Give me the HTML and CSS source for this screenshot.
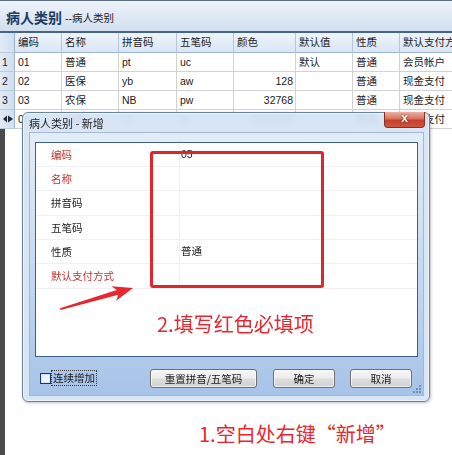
FILE: index.html
```html
<!DOCTYPE html>
<html lang="zh">
<head>
<meta charset="utf-8">
<title>病人类别</title>
<link rel="stylesheet" href="styles.css">
</head>
<body>
<div class="page">
  <div class="header">
    <span class="h-title">病人类别</span>
    <span class="h-sub">--病人类别</span>
  </div>
  <div class="grid">
    <div class="row head">
      <div class="c rn"></div>
      <div class="c w1">编码</div>
      <div class="c w2">名称</div>
      <div class="c w3">拼音码</div>
      <div class="c w4">五笔码</div>
      <div class="c w5">颜色</div>
      <div class="c w6">默认值</div>
      <div class="c w7">性质</div>
      <div class="c w8">默认支付方式</div>
    </div>
    <div class="row">
      <div class="c rn">1</div>
      <div class="c w1">01</div>
      <div class="c w2">普通</div>
      <div class="c w3">pt</div>
      <div class="c w4">uc</div>
      <div class="c w5 num"></div>
      <div class="c w6">默认</div>
      <div class="c w7">普通</div>
      <div class="c w8">会员帐户</div>
    </div>
    <div class="row">
      <div class="c rn">2</div>
      <div class="c w1">02</div>
      <div class="c w2">医保</div>
      <div class="c w3">yb</div>
      <div class="c w4">aw</div>
      <div class="c w5 num">128</div>
      <div class="c w6"></div>
      <div class="c w7">普通</div>
      <div class="c w8">现金支付</div>
    </div>
    <div class="row">
      <div class="c rn">3</div>
      <div class="c w1">03</div>
      <div class="c w2">农保</div>
      <div class="c w3">NB</div>
      <div class="c w4">pw</div>
      <div class="c w5 num">32768</div>
      <div class="c w6"></div>
      <div class="c w7">普通</div>
      <div class="c w8">现金支付</div>
    </div>
    <div class="row">
      <div class="c rn"><svg class="ind" viewBox="0 0 11 8" width="11" height="8"><path d="M0 4 L4 0.5 L4 7.5 Z M5 0.5 L10 4 L5 7.5 Z" fill="#1c2a3a"/></svg></div>
      <div class="c w1">04</div>
      <div class="c w2">自费</div>
      <div class="c w3">zf</div>
      <div class="c w4">tx</div>
      <div class="c w5 num">8388608</div>
      <div class="c w6"></div>
      <div class="c w7">普通</div>
      <div class="c w8">现金支付</div>
    </div>
    <div class="empty"></div>
  </div>

  <div class="dialog">
    <div class="dlg-title">病人类别 - 新增</div>
    <div class="close">x</div>
    <div class="client">
      <div class="panel">
        <div class="prow"><div class="plabel req">编码</div><div class="pval">05</div></div>
        <div class="prow"><div class="plabel req">名称</div><div class="pval"></div></div>
        <div class="prow tall"><div class="plabel">拼音码</div><div class="pval"></div></div>
        <div class="prow"><div class="plabel">五笔码</div><div class="pval"></div></div>
        <div class="prow"><div class="plabel">性质</div><div class="pval">普通</div></div>
        <div class="prow tall"><div class="plabel req">默认支付方式</div><div class="pval"></div></div>
      </div>
      <div class="footer">
        <span class="chk"></span>
        <span class="chk-label">连续增加</span>
        <div class="btns">
          <div class="btn wide">重置拼音/五笔码</div>
          <div class="btn">确定</div>
          <div class="btn">取消</div>
        </div>
      </div>
      <svg class="grip" viewBox="0 0 10 10" width="10" height="10">
        <g fill="#6f8fb8">
          <rect x="7" y="1" width="2" height="2"/>
          <rect x="4" y="4" width="2" height="2"/><rect x="7" y="4" width="2" height="2"/>
          <rect x="1" y="7" width="2" height="2"/><rect x="4" y="7" width="2" height="2"/><rect x="7" y="7" width="2" height="2"/>
        </g>
      </svg>
    </div>
  </div>

  <div class="redbox"></div>
  <svg class="arrow" viewBox="0 0 85 35" width="85" height="35">
    <path d="M5 28.3 L61.9 10 L56.4 6.2 L78 8 L61.2 20.8 L63.3 14.8 L5.6 30 Z" fill="#e8262d"/>
  </svg>
  <div class="note note2">2.填写红色必填项</div>
  <div class="note note1">1.空白处右键“新增”</div>
</div>
</body>
</html>
```

FILE: styles.css
```css
html, body {
  margin: 0;
  padding: 0;
  background: #fff;
}
body {
  font-family: "Liberation Sans", "Noto Sans CJK SC", sans-serif;
  font-size: 10.5px;
  color: #1a1a1a;
}
.page {
  position: relative;
  width: 452px;
  height: 455px;
  overflow: hidden;
  display: flex;
  flex-direction: column;
}

/* header */
.header {
  height: 29px;
  box-sizing: content-box;
  border-top: 1px solid #5d6d82;
  border-bottom: 2px solid #46638c;
  background: linear-gradient(#eef3fa, #d2dfef);
  display: flex;
  align-items: center;
  padding: 1px 0 0 6px;
  gap: 3px;
  flex: none;
}
.h-title {
  font-family: "Noto Sans CJK SC", sans-serif;
  font-weight: 700;
  font-size: 14px;
  color: #203a62;
  line-height: 18px;
}
.h-sub {
  font-family: "Liberation Sans", "Noto Sans CJK SC", sans-serif;
  font-size: 10.5px;
  color: #222;
  line-height: 14px;
  margin-top: 2px;
}

/* grid */
.grid {
  flex: 1;
  display: flex;
  flex-direction: column;
  width: 480px;
}
.row {
  display: flex;
  height: 19px;
  flex: none;
}
.row.head {
  height: 20px;
}
.c {
  box-sizing: border-box;
  border-right: 1px solid #d2d2d2;
  border-bottom: 1px solid #d2d2d2;
  padding-left: 3px;
  line-height: 18px;
  white-space: nowrap;
  overflow: hidden;
  flex: none;
  background: #fff;
}
.head .c {
  background: linear-gradient(#eef4fb, #d9e6f4);
  border-right: 1px solid #b3c6dd;
  border-bottom: 1px solid #9db3cf;
  line-height: 19px;
  color: #1d1d1d;
}
.c.rn {
  width: 15px;
  padding-left: 2px;
  background: linear-gradient(90deg, #e2ebf6, #cfdef0);
  border-right: 1px solid #9db3cf;
  border-bottom: 1px solid #b8cbe2;
}
.ind {
  display: block;
  margin: 5px 0 0 1px;
}
.w1 { width: 47px; }
.w2 { width: 57px; }
.w3 { width: 58px; }
.w4 { width: 57px; }
.w5 { width: 62px; }
.w6 { width: 57px; }
.w7 { width: 47px; }
.w8 { width: 80px; }
.c.num {
  text-align: right;
  padding-right: 2px;
}
.empty {
  flex: 1;
  border-left: 5px solid #4a4a4a;
}

/* dialog */
.dialog {
  position: absolute;
  left: 22px;
  top: 112px;
  width: 408px;
  height: 290px;
  box-sizing: border-box;
  border: 1px solid #6c819c;
  border-radius: 6px;
  background: rgba(212, 227, 244, 0.92);
  backdrop-filter: blur(3px);
  box-shadow: inset 0 0 0 1px rgba(255, 255, 255, 0.55), 1px 1px 3px rgba(0, 0, 0, 0.25);
  padding: 0 5px 5px 6px;
  display: flex;
  flex-direction: column;
}
.dlg-title {
  height: 19px;
  line-height: 21px;
  font-family: "Noto Sans CJK SC", sans-serif;
  font-size: 11px;
  color: #1b1b1b;
  flex: none;
}
.close {
  position: absolute;
  right: 4px;
  top: -1px;
  width: 41px;
  height: 16px;
  box-sizing: border-box;
  border: 1px solid #8b2f24;
  border-top: none;
  border-radius: 0 0 4px 4px;
  background: linear-gradient(#eab0a2 0%, #d9735f 45%, #c2412d 55%, #d2543c 100%);
  color: #fff;
  font-family: "Liberation Sans", sans-serif;
  font-weight: 700;
  font-size: 12px;
  line-height: 13px;
  text-align: center;
  text-shadow: 0 0 2px #5a1a12;
}
.client {
  position: relative;
  flex: 1;
  display: flex;
  flex-direction: column;
  border: 1px solid #a3b8d2;
  padding: 9px 5px 0 5px;
  background: linear-gradient(#e3edf8, #cadcf1 45%, #a7c3e8 100%);
}
.panel {
  height: 215px;
  flex: none;
  box-sizing: border-box;
  border: 1px solid #3e5f8a;
  background: #fff;
}
.prow {
  display: flex;
  height: 24px;
  box-sizing: border-box;
  border-bottom: 1px solid #edf0f4;
}
.prow.tall {
  height: 25px;
}
.plabel {
  width: 144px;
  box-sizing: border-box;
  padding-left: 15px;
  border-right: 1px solid #eef1f5;
  font-family: "Noto Sans CJK SC", sans-serif;
  font-size: 10.5px;
  line-height: 23px;
  color: #222;
}
.plabel.req {
  color: #c8322c;
}
.pval {
  flex: 1;
  padding-left: 1px;
  font-family: "Liberation Sans", "Noto Sans CJK SC", sans-serif;
  font-size: 10.5px;
  line-height: 23px;
  color: #1a1a1a;
}
.footer {
  flex: 1;
  display: flex;
  align-items: center;
  padding: 4px 6px 0 5px;
}
.chk {
  width: 11px;
  height: 11px;
  box-sizing: border-box;
  border: 1px solid #1d3a5c;
  background: linear-gradient(135deg, #dfeaf7, #ffffff);
  box-shadow: inset 0 0 0 1px #cfe0f2;
  flex: none;
}
.chk-label {
  margin-left: 1px;
  padding: 0 1px;
  outline: 1px dotted #3a3a3a;
  font-family: "Noto Sans CJK SC", sans-serif;
  font-size: 10.5px;
  line-height: 14px;
  color: #1a1a1a;
}
.btns {
  margin-left: auto;
  display: flex;
  gap: 15px;
}
.btn {
  width: 62px;
  height: 19px;
  box-sizing: border-box;
  border: 1px solid #707070;
  border-radius: 3px;
  background: linear-gradient(#f7f7f7 0%, #ececec 48%, #dedede 52%, #d0d0d0 100%);
  box-shadow: inset 0 0 0 1px rgba(255, 255, 255, 0.7);
  text-align: center;
  font-family: "Noto Sans CJK SC", sans-serif;
  font-size: 10.5px;
  line-height: 17px;
  color: #1a1a1a;
}
.btn.wide {
  width: 107px;
  margin-right: 1px;
}
.grip {
  position: absolute;
  right: 1px;
  bottom: 1px;
}

/* annotations */
.redbox {
  position: absolute;
  left: 150px;
  top: 151px;
  width: 174px;
  height: 137px;
  box-sizing: border-box;
  border: 3px solid #e0262b;
  border-radius: 3px;
}
.arrow {
  position: absolute;
  left: 55px;
  top: 280px;
}
.note {
  position: absolute;
  font-family: "Noto Sans CJK SC", sans-serif;
  font-size: 20px;
  line-height: 22px;
  color: #e8262d;
  white-space: nowrap;
}
.note2 {
  left: 157px;
  top: 313px;
}
.note1 {
  left: 199px;
  top: 423px;
}
```
